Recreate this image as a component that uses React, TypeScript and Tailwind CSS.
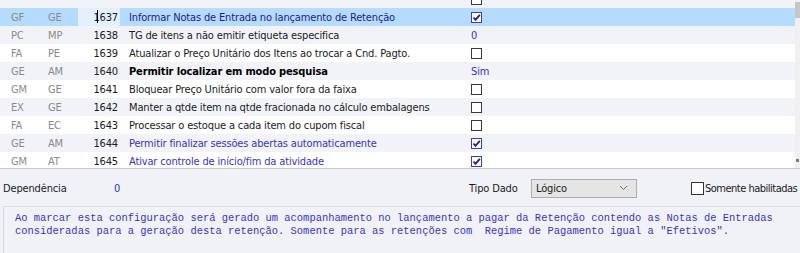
import { Fragment } from "react";

type Row = {
  a: string;
  b: string;
  id: string;
  desc: string;
  value: "on" | "off" | string;
  tone?: "blue" | "bold";
};

const rows: Row[] = [
  { a: "GF", b: "GE", id: "1637", desc: "Informar Notas de Entrada no lançamento de Retenção", value: "on", tone: "blue" },
  { a: "PC", b: "MP", id: "1638", desc: "TG de itens a não emitir etiqueta especifica", value: "0" },
  { a: "FA", b: "PE", id: "1639", desc: "Atualizar o Preço Unitário dos Itens ao trocar a Cnd. Pagto.", value: "off" },
  { a: "GE", b: "AM", id: "1640", desc: "Permitir localizar em modo pesquisa", value: "Sim", tone: "bold" },
  { a: "GM", b: "GE", id: "1641", desc: "Bloquear Preço Unitário com valor fora da faixa", value: "off" },
  { a: "EX", b: "GE", id: "1642", desc: "Manter a qtde item na qtde fracionada no cálculo embalagens", value: "off" },
  { a: "FA", b: "EC", id: "1643", desc: "Processar o estoque a cada item do cupom fiscal", value: "off" },
  { a: "GE", b: "AM", id: "1644", desc: "Permitir finalizar sessões abertas automaticamente", value: "on", tone: "blue" },
  { a: "GM", b: "AT", id: "1645", desc: "Ativar controle de início/fim da atividade", value: "on", tone: "blue" },
];

const Box = ({ checked }: { checked: boolean }) =>
  checked ? (
    <span className="w-[11px] h-[11px] border border-[#3b3bc4] bg-white flex items-center justify-center">
      <svg width="9" height="9" viewBox="0 0 9 9">
        <path d="M1.5 4.5 L3.5 6.8 L7.8 1.8" stroke="#1e1e8a" strokeWidth="1.8" fill="none" />
      </svg>
    </span>
  ) : (
    <span className="w-[11px] h-[11px] border border-[#3a3a3a] bg-white" />
  );

const GridRow = ({ row, index, selected }: { row: Row; index: number; selected?: boolean }) => {
  const bg = selected ? "bg-[#b5dbff]" : index % 2 === 1 ? "bg-[#f2f3f9]" : "bg-white";
  const descClass =
    row.tone === "bold"
      ? "font-bold text-black"
      : row.tone === "blue"
        ? selected
          ? "text-[#1c1c8a]"
          : "text-[#3434c8]"
        : "text-[#1a1a1a]";
  return (
    <div className={`flex h-[18px] items-center ${bg}`}>
      <div className="w-[36px] pl-[11px] text-[#8a8a8a]">{row.a}</div>
      <div className="w-[42px] pl-[12px] text-[#8a8a8a]">{row.b}</div>
      <div
        className={`w-[42px] h-full flex items-center justify-end pr-[2px] text-[#1a1a1a] relative ${
          selected ? "bg-[#e3f0ff]" : ""
        }`}
      >
        {selected && <span className="absolute left-[19px] top-[2px] w-px h-[13px] bg-black" />}
        {row.id}
      </div>
      <div className={`w-[349px] pl-[9px] whitespace-nowrap ${descClass}`}>{row.desc}</div>
      <div className="flex-1 pl-[2px] flex items-center">
        {row.value === "on" || row.value === "off" ? (
          <Box checked={row.value === "on"} />
        ) : (
          <span className="text-[#3434c8]">{row.value}</span>
        )}
      </div>
    </div>
  );
};

export default function App() {
  return (
    <div
      className="w-[800px] h-[253px] overflow-hidden bg-[#f1f2f8] text-[11px] leading-[13px] tracking-[-0.15px] text-[#1a1a1a]"
      style={{ fontFamily: "Tahoma, 'DejaVu Sans Condensed', 'Liberation Sans', sans-serif" }}
    >
      {/* grid */}
      <div className="flex h-[169px] border-b border-[#c9c9cf]">
        <div className="w-[795px] h-[168px] overflow-hidden bg-white">
          <div className="-mt-[10px]">
            <div className="flex h-[18px] items-center bg-[#f2f3f9]">
              <div className="w-[469px]" />
              <div className="pl-[2px] flex items-center">
                <Box checked={false} />
              </div>
            </div>
            {rows.map((r, i) => (
              <Fragment key={r.id}>
                <GridRow row={r} index={i} selected={i === 0} />
              </Fragment>
            ))}
          </div>
        </div>
        <div className="w-[5px] bg-[#f0f0f0] flex flex-col justify-between">
          <div className="mt-[2px] h-[16px] bg-[#c6c6c6]" />
          <div className="mb-[6px] ml-[1px] w-[3px] h-[3px] bg-[#7a7a7a]" />
        </div>
      </div>

      {/* filters */}
      <div className="flex items-center h-[37px] pt-[1px] whitespace-nowrap">
        <div className="w-[114px] pl-[3px] shrink-0">Dependência</div>
        <div className="w-[355px] shrink-0 text-[#3434c8]">0</div>
        <div className="w-[62px] shrink-0">Tipo Dado</div>
        <div className="w-[106px] h-[19px] shrink-0 border border-[#adadad] bg-[#e5e5e5] flex items-center justify-between pl-[4px] pr-[8px]">
          <span className="pt-[1px]">Lógico</span>
          <svg width="9" height="6" viewBox="0 0 9 6">
            <path d="M1 1 L4.5 4.5 L8 1" stroke="#6e6e6e" strokeWidth="1" fill="none" />
          </svg>
        </div>
        <div className="ml-[54px] flex items-center shrink-0">
          <span className="w-[13px] h-[13px] border border-[#333] bg-white" />
          <span className="ml-[1px] tracking-[-0.5px]">Somente habilitadas</span>
        </div>
      </div>

      {/* memo */}
      <div className="ml-[3px] h-[47px] border-t border-l border-[#dcdce2] pl-[11px] pt-[5px] tracking-normal">
        <p
          className="text-[10.45px] leading-[13px] text-[#3a32c8] whitespace-pre"
          style={{ fontFamily: "'Liberation Mono', 'Courier New', monospace" }}
        >
          {
            'Ao marcar esta configuração será gerado um acompanhamento no lançamento a pagar da Retenção contendo as Notas de Entradas\nconsideradas para a geração desta retenção. Somente para as retenções com  Regime de Pagamento igual a "Efetivos".'
          }
        </p>
      </div>
    </div>
  );
}
